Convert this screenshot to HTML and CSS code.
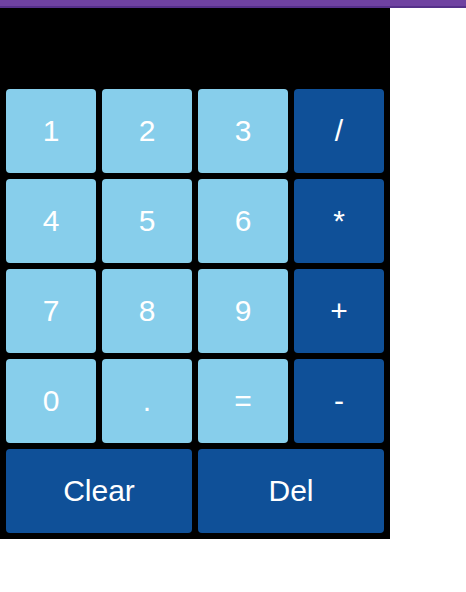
FILE: index.html
```html
<!DOCTYPE html>
<html>
<head>
<meta charset="utf-8">
<link rel="stylesheet" href="styles.css">
</head>
<body>
<div class="topbar"></div>
<div class="calc">
  <div class="display"></div>
  <div class="keys">
    <button class="key num">1</button>
    <button class="key num">2</button>
    <button class="key num">3</button>
    <button class="key op">/</button>
    <button class="key num">4</button>
    <button class="key num">5</button>
    <button class="key num">6</button>
    <button class="key op">*</button>
    <button class="key num">7</button>
    <button class="key num">8</button>
    <button class="key num">9</button>
    <button class="key op">+</button>
    <button class="key num">0</button>
    <button class="key num">.</button>
    <button class="key num">=</button>
    <button class="key op">-</button>
    <button class="key op wide">Clear</button>
    <button class="key op wide">Del</button>
  </div>
</div>
</body>
</html>
```
FILE: styles.css
```css
html, body {
  margin: 0;
  padding: 0;
  background: #ffffff;
  font-family: "Liberation Sans", Arial, sans-serif;
}
.topbar {
  height: 6px;
  background: #6f42a1;
  border-bottom: 2px solid #55308a;
}
.calc {
  width: 390px;
  box-sizing: border-box;
  background: #000000;
  padding: 0 6px 6px 6px;
  display: flex;
  flex-direction: column;
  gap: 6px;
}
.display {
  height: 75px;
}
.keys {
  display: grid;
  grid-template-columns: repeat(4, 90px);
  grid-auto-rows: 84px;
  gap: 6px;
}
.key {
  border: none;
  border-radius: 4px;
  color: #ffffff;
  font-family: "Liberation Sans", Arial, sans-serif;
  font-size: 30px;
  padding: 0;
  margin: 0;
}
.num {
  background: #87ceeb;
}
.op {
  background: #0f5098;
}
.wide {
  grid-column: span 2;
}
```
